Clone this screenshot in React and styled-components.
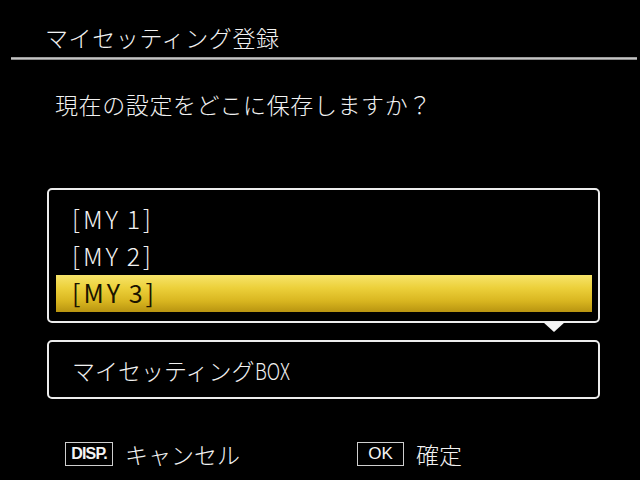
import React from "react";
import styled, { createGlobalStyle } from "styled-components";

const Global = createGlobalStyle`
  html, body { margin: 0; padding: 0; background: #000; }
  body { width: 640px; height: 480px; overflow: hidden; }
  * { box-sizing: border-box; }
`;

const jp = `"Noto Sans CJK JP", "Noto Sans", sans-serif`;

const Screen = styled.div`
  width: 640px;
  height: 480px;
  background: #000;
  color: #f2f2f2;
  font-family: ${jp};
  font-weight: 300;
  display: flex;
  flex-direction: column;
`;

const Header = styled.div`
  padding: 25px 0 8px 45px;
  font-size: 23px;
  line-height: 24px;
  letter-spacing: 0.6px;
  height: 57px;
`;

const Divider = styled.div`
  height: 3px;
  margin: 0 3px 0 11px;
  background: linear-gradient(to bottom, #8a8a8a, #c4c4c4 50%, #6e6e6e);
`;

const Question = styled.div`
  margin-top: 32px;
  padding-left: 55px;
  font-size: 23px;
  line-height: 24px;
  letter-spacing: 0.6px;
`;

const ListWrap = styled.div`
  position: relative;
  margin: 72px 0 0 47px;
  width: 553px;
`;

const Box = styled.div`
  border: 2px solid #ececec;
  border-radius: 5px;
  width: 553px;
`;

const ListBox = styled(Box)`
  padding: 11px 6px 9px 7px;
  display: flex;
  flex-direction: column;
`;

const Row = styled.div`
  height: 37px;
  display: flex;
  align-items: center;
  padding: 0 0 3px 16px;
  font-size: 25px;
  letter-spacing: 3px;
  word-spacing: -3px;
  font-weight: ${(p) => (p.$selected ? 400 : 300)};
  color: ${(p) => (p.$selected ? "#1a1400" : "#f2f2f2")};
  background: ${(p) =>
    p.$selected
      ? "linear-gradient(to bottom, #f7e46a 0%, #ecd03a 35%, #d9b620 70%, #b89410 100%)"
      : "transparent"};
`;

const Arrow = styled.div`
  position: absolute;
  right: 35px;
  top: 134px;
  width: 0;
  height: 0;
  border-left: 11px solid transparent;
  border-right: 11px solid transparent;
  border-top: 10px solid #f4f4f4;
`;

const BoxRow = styled(Box)`
  margin: 17px 0 0 47px;
  height: 59px;
  display: flex;
  align-items: center;
  padding-left: 23px;
  font-size: 23px;
  line-height: 24px;
`;

const Narrow = styled.span`
  display: inline-block;
  transform: scaleX(0.8);
  transform-origin: left center;
`;

const Footer = styled.div`
  margin-top: 43px;
  display: flex;
  align-items: center;
  height: 24px;
`;

const Action = styled.div`
  display: flex;
  align-items: center;
  gap: 12px;
  margin-left: ${(p) => p.$ml}px;
  font-size: 23px;
  line-height: 24px;
`;

const Key = styled.div`
  width: ${(p) => p.$w}px;
  height: 24px;
  border: 1.5px solid #cfcfcf;
  display: flex;
  align-items: center;
  justify-content: center;
  font-family: "Liberation Sans", Arial, sans-serif;
  font-size: ${(p) => p.$fs}px;
  font-weight: ${(p) => p.$fw};
  letter-spacing: ${(p) => p.$ls}px;
  color: #f4f4f4;
`;

export default function App() {
  const items = ["[MY 1]", "[MY 2]", "[MY 3]"];
  return (
    <Screen>
      <Global />
      <Header>マイセッティング登録</Header>
      <Divider />
      <Question>現在の設定をどこに保存しますか？</Question>
      <ListWrap>
        <ListBox>
          {items.map((t, i) => (
            <Row key={t} $selected={i === 2}>
              {t}
            </Row>
          ))}
        </ListBox>
        <Arrow />
      </ListWrap>
      <BoxRow>
        マイセッティング<Narrow>BOX</Narrow>
      </BoxRow>
      <Footer>
        <Action $ml={65}>
          <Key $w={48} $fs={16} $fw={700} $ls={-0.8}>DISP.</Key>
          キャンセル
        </Action>
        <Action $ml={117}>
          <Key $w={47} $fs={17} $fw={400} $ls={0}>OK</Key>
          確定
        </Action>
      </Footer>
    </Screen>
  );
}
